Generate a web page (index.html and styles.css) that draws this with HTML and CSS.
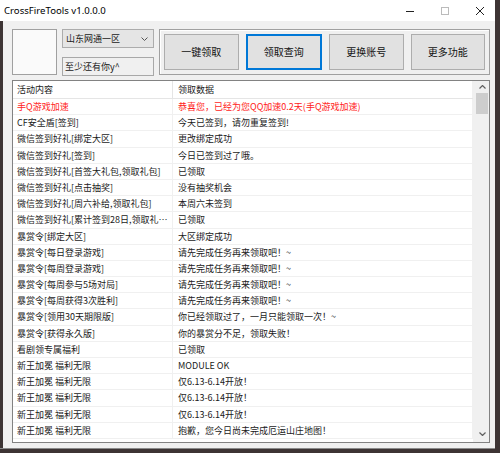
FILE: index.html
```html
<!DOCTYPE html>
<html>
<head>
<meta charset="utf-8">
<link rel="stylesheet" href="styles.css">
</head>
<body>
<div class="window">
  <div class="titlebar">
    <div class="title">CrossFireTools v1.0.0.0</div>
    <div class="controls">
      <svg class="ctl" width="8" height="8" viewBox="0 0 8 8"><path d="M0 4.5H8" stroke="#222" stroke-width="1"/></svg>
      <svg class="ctl" width="8" height="8" viewBox="0 0 8 8"><rect x="0.5" y="0.5" width="7" height="7" fill="none" stroke="#bbb" stroke-width="1"/></svg>
      <svg class="ctl" width="8" height="8" viewBox="0 0 8 8"><path d="M0 0L8 8M8 0L0 8" stroke="#222" stroke-width="1"/></svg>
    </div>
  </div>
  <div class="client">
    <div class="toprow">
      <div class="avatar"></div>
      <div class="inputs">
        <div class="combo"><span>山东网通一区</span>
          <svg width="7" height="4" viewBox="0 0 7 4"><path d="M0.5 0.5L3.5 3.5L6.5 0.5" fill="none" stroke="#555" stroke-width="1"/></svg>
        </div>
        <div class="textbox">至少还有你y^</div>
      </div>
      <div class="group">
        <div class="btn">一键领取</div>
        <div class="btn focus">领取查询</div>
        <div class="btn">更换账号</div>
        <div class="btn">更多功能</div>
      </div>
    </div>
    <div class="list">
      <div class="table">
        <div class="row head"><div class="c1">活动内容</div><div class="c2">领取数据</div></div>
        <div class="row red"><div class="c1">手Q游戏加速</div><div class="c2">恭喜您，已经为您QQ加速0.2天(手Q游戏加速)</div></div>
        <div class="row"><div class="c1">CF安全盾[签到]</div><div class="c2">今天已签到，请勿重复签到!</div></div>
        <div class="row"><div class="c1">微信签到好礼[绑定大区]</div><div class="c2">更改绑定成功</div></div>
        <div class="row"><div class="c1">微信签到好礼[签到]</div><div class="c2">今日已签到过了哦。</div></div>
        <div class="row"><div class="c1">微信签到好礼[首签大礼包,领取礼包]</div><div class="c2">已领取</div></div>
        <div class="row"><div class="c1">微信签到好礼[点击抽奖]</div><div class="c2">没有抽奖机会</div></div>
        <div class="row"><div class="c1">微信签到好礼[周六补给,领取礼包]</div><div class="c2">本周六未签到</div></div>
        <div class="row"><div class="c1">微信签到好礼[累计签到28日,领取礼包]</div><div class="c2">已领取</div></div>
        <div class="row"><div class="c1">暴赏令[绑定大区]</div><div class="c2">大区绑定成功</div></div>
        <div class="row"><div class="c1">暴赏令[每日登录游戏]</div><div class="c2">请先完成任务再来领取吧！~</div></div>
        <div class="row"><div class="c1">暴赏令[每周登录游戏]</div><div class="c2">请先完成任务再来领取吧！~</div></div>
        <div class="row"><div class="c1">暴赏令[每周参与5场对局]</div><div class="c2">请先完成任务再来领取吧！~</div></div>
        <div class="row"><div class="c1">暴赏令[每周获得3次胜利]</div><div class="c2">请先完成任务再来领取吧！~</div></div>
        <div class="row"><div class="c1">暴赏令[领用30天期限版]</div><div class="c2">你已经领取过了，一月只能领取一次！~</div></div>
        <div class="row"><div class="c1">暴赏令[获得永久版]</div><div class="c2">你的暴赏分不足，领取失败！</div></div>
        <div class="row"><div class="c1">看剧领专属福利</div><div class="c2">已领取</div></div>
        <div class="row"><div class="c1">新王加冕 福利无限</div><div class="c2">MODULE OK</div></div>
        <div class="row"><div class="c1">新王加冕 福利无限</div><div class="c2">仅6.13-6.14开放！</div></div>
        <div class="row"><div class="c1">新王加冕 福利无限</div><div class="c2">仅6.13-6.14开放！</div></div>
        <div class="row"><div class="c1">新王加冕 福利无限</div><div class="c2">仅6.13-6.14开放！</div></div>
        <div class="row"><div class="c1">新王加冕 福利无限</div><div class="c2">抱歉，您今日尚未完成厄运山庄地图！</div></div>
      </div>
      <div class="scrollbar">
        <div class="sb-up"><svg width="7" height="4" viewBox="0 0 7 4"><path d="M0.5 3.5L3.5 0.5L6.5 3.5" fill="none" stroke="#606060" stroke-width="1.2"/></svg></div>
        <div class="thumb"></div>
        <div class="sb-fill"></div>
        <div class="sb-down"><svg width="7" height="4" viewBox="0 0 7 4"><path d="M0.5 0.5L3.5 3.5L6.5 0.5" fill="none" stroke="#606060" stroke-width="1.2"/></svg></div>
      </div>
    </div>
  </div>
</div>
</body>
</html>
```
FILE: styles.css
```css
* { box-sizing: border-box; margin: 0; padding: 0; }
body {
  margin: 0;
  width: 500px;
  height: 453px;
  overflow: hidden;
  background: #3d3434;
  font-family: "Noto Sans CJK SC", "Noto Sans", sans-serif;
  color: #1a1a1a;
}
.window {
  width: 495px;
  height: 449px;
  display: flex;
  flex-direction: column;
  background: #f0f0f0;
  border-bottom: 1px solid #8a8a8a;
}
.titlebar {
  height: 21px;
  background: #fff;
  display: flex;
  align-items: center;
  padding-left: 4px;
  padding-right: 11px;
}
.title {
  flex: 1;
  font-family: "Noto Sans", sans-serif;
  font-size: 9.6px;
  font-weight: 400;
  color: #000;
  line-height: 12px;
}
.controls { display: flex; gap: 27px; align-items: center; }
.ctl { display: block; }
.client {
  flex: 1;
  border-left: 3px solid #3d3434;
  padding: 8px 5px 5px 9px;
  display: flex;
  flex-direction: column;
  gap: 4px;
}
.toprow {
  height: 47px;
  display: flex;
  gap: 5px;
}
.avatar {
  width: 45px;
  height: 46px;
  border: 1px solid #a0a0a0;
  background: #fafafa;
}
.inputs {
  width: 92px;
  display: flex;
  flex-direction: column;
  justify-content: space-between;
}
.combo {
  height: 19px;
  border: 1px solid #acacac;
  background: #e5e5e5;
  display: flex;
  align-items: center;
  justify-content: space-between;
  padding: 0 5px 0 3px;
  font-size: 9px;
  line-height: 12px;
}
.textbox {
  height: 19px;
  border: 1px solid #a8a8a8;
  background: #f0f0f0;
  padding: 0 2px;
  font-size: 9px;
  line-height: 17px;
}
.group {
  width: 331px;
  height: 46px;
  border: 1px solid #a0a0a0;
  box-shadow: inset 1px 1px 0 #fff;
  padding: 4px;
  display: flex;
  gap: 7px;
}
.btn {
  flex: 1;
  height: 36px;
  border: 1px solid #adadad;
  background: #e1e1e1;
  display: flex;
  align-items: center;
  justify-content: center;
  font-size: 10px;
  line-height: 12px;
  color: #111;
}
.btn.focus { border: 2px solid #0078d7; }
.list {
  flex: 1;
  border: 1px solid #828282;
  background: #fff;
  display: flex;
  overflow: hidden;
}
.table { flex: 1; display: flex; flex-direction: column; }
.row {
  height: 16.2px;
  display: flex;
  border-bottom: 1px solid #f0f0f0;
  font-size: 9px;
  line-height: 15px;
  white-space: nowrap;
}
.row.head { height: 18px; line-height: 17px; border-bottom-color: #e5e5e5; }
.row.red { color: #ff1a1a; }
.c1 {
  width: 160px;
  padding-left: 4px;
  padding-right: 3px;
  border-right: 1px solid #f0f0f0;
  overflow: hidden;
  text-overflow: ellipsis;
}
.head .c1 { border-right-color: #e5e5e5; }
.c2 { flex: 1; padding-left: 5px; overflow: hidden; border-right: 1px solid #f0f0f0; }
.scrollbar {
  width: 16px;
  background: #f0f0f0;
  display: flex;
  flex-direction: column;
}
.sb-up, .sb-down {
  display: flex;
  align-items: center;
  justify-content: center;
  padding-left: 2px;
}
.sb-up { height: 12px; }
.sb-down { height: 17px; }
.thumb {
  height: 21px;
  width: 12px;
  margin-left: 3px;
  background: #cdcdcd;
}
.sb-fill { flex: 1; }
```
